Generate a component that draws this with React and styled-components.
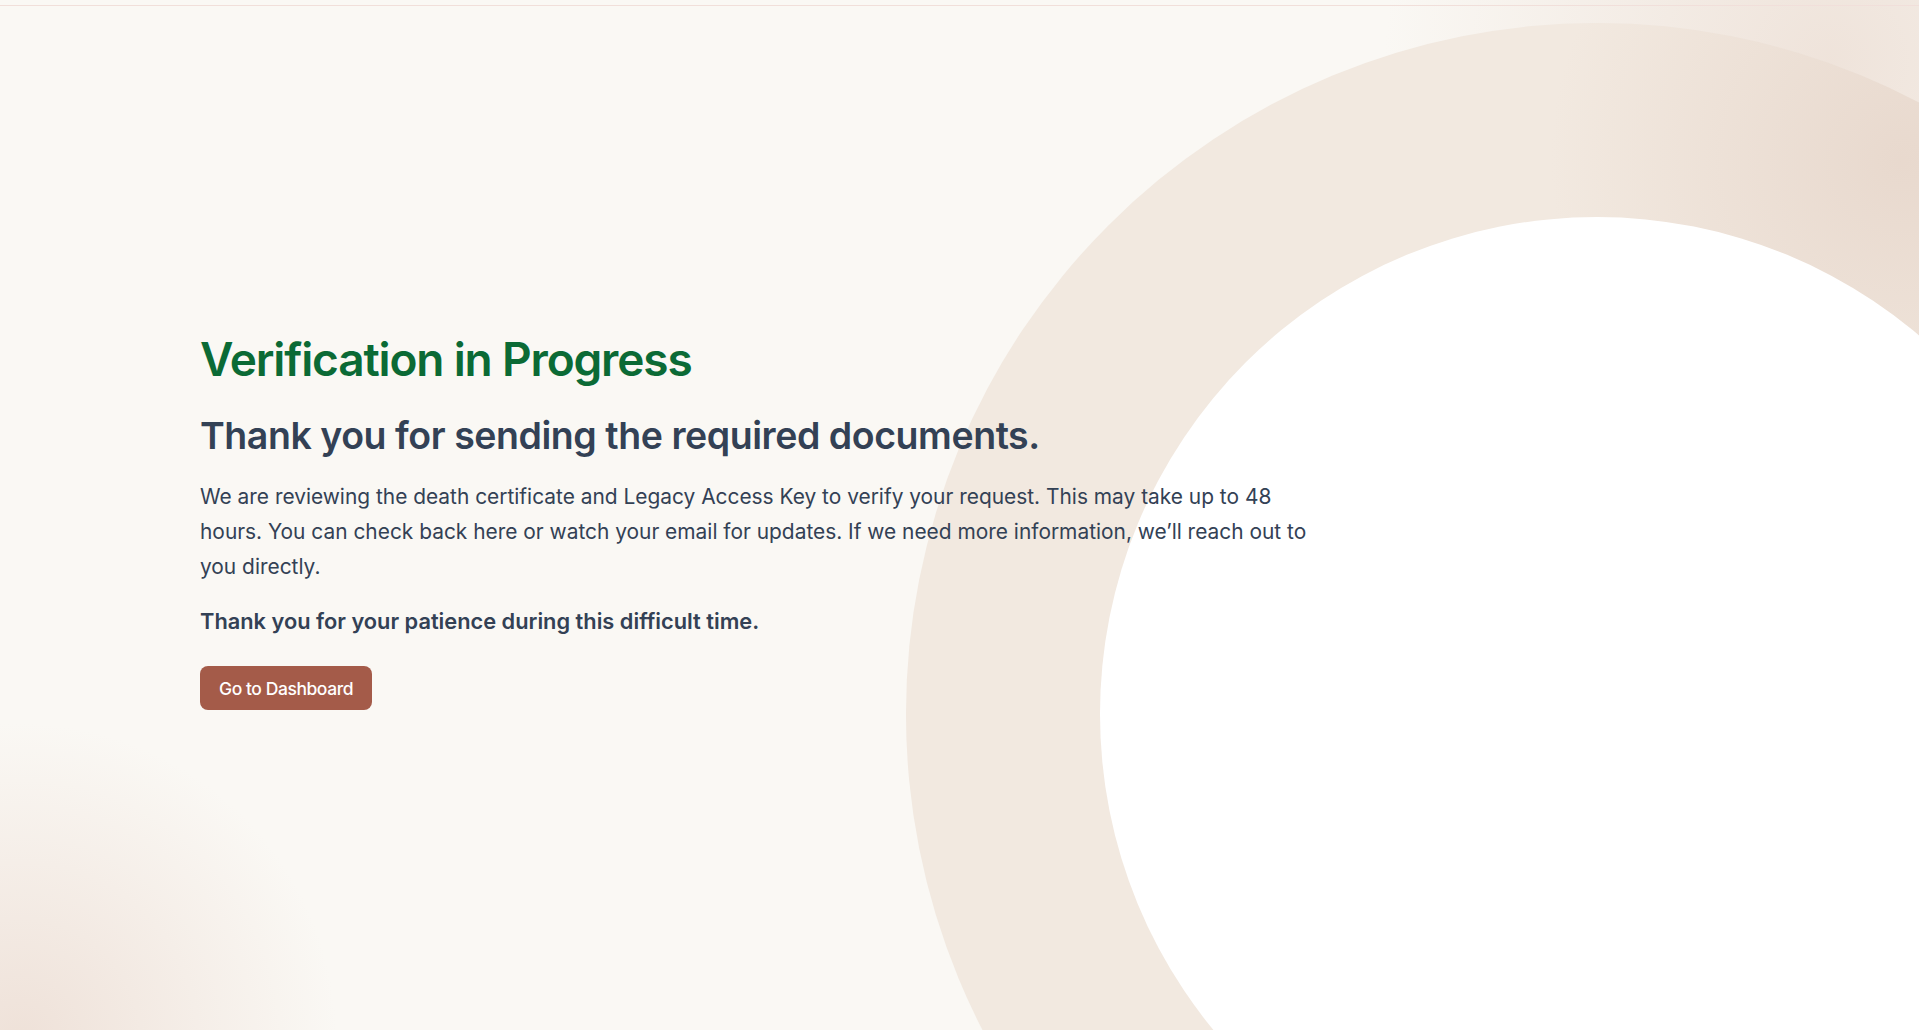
import React from 'react';
import styled, { createGlobalStyle } from 'styled-components';

const GlobalStyle = createGlobalStyle`
  * { box-sizing: border-box; }
  html, body {
    margin: 0;
    padding: 0;
    background: #faf8f4;
  }
  body {
    font-family: Inter, "Noto Sans", sans-serif;
    color: #334155;
    -webkit-font-smoothing: antialiased;
  }
`;

const Page = styled.div`
  position: relative;
  min-height: 100vh;
  display: flex;
  flex-direction: column;
  background: #faf8f4;
  overflow: hidden;
`;

const TopBar = styled.div`
  height: 6px;
  border-bottom: 1px solid #f1dfda;
  position: relative;
  z-index: 2;
`;

// decorative ring, sits behind the content
const Ring = styled.div`
  position: absolute;
  left: 906px;
  top: 23px;
  width: 1382px;
  height: 1382px;
  border-radius: 50%;
  background:
    radial-gradient(circle at 72% 10%, rgba(228, 210, 198, 0.7), rgba(228, 210, 198, 0) 22%),
    #f2e9e0;

  &::after {
    content: '';
    position: absolute;
    inset: 194px;
    border-radius: 50%;
    background: #ffffff;
  }
`;

const Glow = styled.div`
  position: absolute;
  pointer-events: none;
  border-radius: 50%;
  width: ${p => p.size}px;
  height: ${p => p.size}px;
  left: ${p => p.x - p.size / 2}px;
  top: ${p => p.y - p.size / 2}px;
  background: radial-gradient(circle, ${p => p.color} 0%, rgba(250, 248, 244, 0) 70%);
`;

const Main = styled.main`
  position: relative;
  z-index: 1;
  flex: 1;
  display: flex;
  align-items: center;
  padding: 6px 200px 0;
`;

const Content = styled.section`
  max-width: 1122px;
  display: flex;
  flex-direction: column;
  align-items: flex-start;
`;

const Title = styled.h1`
  margin: 0;
  font-size: 46px;
  line-height: 54px;
  font-weight: 600;
  letter-spacing: -0.025em;
  color: #0b6a35;
`;

const Subtitle = styled.h2`
  margin: 27px 0 0;
  font-size: 37.5px;
  line-height: 46px;
  font-weight: 600;
  letter-spacing: -0.012em;
  color: #334155;
`;

const Body = styled.p`
  margin: 20px 0 0;
  font-size: 20.9px;
  line-height: 35px;
  font-weight: 400;
  color: #334155;
`;

const Note = styled.p`
  margin: 22px 0 0;
  font-size: 21.8px;
  line-height: 30px;
  font-weight: 600;
  color: #334155;
`;

const Button = styled.button`
  margin-top: 30px;
  height: 44px;
  padding: 0 19px;
  border: none;
  border-radius: 8px;
  background: #a45b49;
  color: #ffffff;
  font-family: Inter, "Noto Sans", sans-serif;
  font-size: 17.5px;
  font-weight: 500;
  letter-spacing: -0.025em;
  cursor: pointer;

  &:hover {
    background: #934f3f;
  }
`;

export default function App() {
  return (
    <>
      <GlobalStyle />
      <Page>
        <TopBar />
        <Glow size={900} x={1830} y={60} color="rgba(236, 222, 212, 0.8)" />
        <Ring />
        <Glow size={640} x={20} y={1040} color="rgba(238, 224, 215, 0.95)" />
        <Main>
          <Content>
            <Title>Verification in Progress</Title>
            <Subtitle>Thank you for sending the required documents.</Subtitle>
            <Body>
              We are reviewing the death certificate and Legacy Access Key to verify your
              request. This may take up to 48 hours. You can check back here or watch your
              email for updates. If we need more information, we’ll reach out to you directly.
            </Body>
            <Note>Thank you for your patience during this difficult time.</Note>
            <Button>Go to Dashboard</Button>
          </Content>
        </Main>
      </Page>
    </>
  );
}
